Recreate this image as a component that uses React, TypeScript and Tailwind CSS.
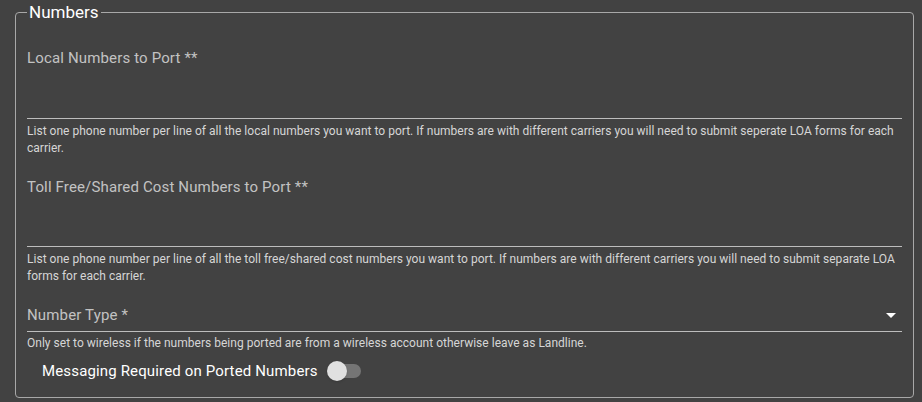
import React from "react";

export default function App() {
  return (
    <div
      className="w-[922px] h-[402px] bg-[#424242] pl-[15px] pr-[8px] pt-[2px] overflow-hidden"
      style={{ fontFamily: "Roboto, 'Liberation Sans', sans-serif" }}
    >
      <fieldset className="border border-[#a8a8a8] rounded-[4px] px-[11px] pb-[6px] h-[396px]">
        <legend className="px-[2px] text-[17px] leading-[20px] text-white">Numbers</legend>

        <div className="h-[97px] border-b border-[#bdbdbd] pt-[27px]">
          <div className="text-[15px] leading-[18px] tracking-[0.15px] text-[#c2c2c2]">Local Numbers to Port **</div>
        </div>
        <p className="mt-[4px] text-[12px] leading-[17px] tracking-[0.02px] text-[#d6d6d6]">
          List one phone number per line of all the local numbers you want to port. If numbers are with different carriers you will need to submit seperate LOA forms for each carrier.
        </p>

        <div className="h-[90px] border-b border-[#bdbdbd] pt-[21px]">
          <div className="text-[15px] leading-[18px] tracking-[0.15px] text-[#c2c2c2]">Toll Free/Shared Cost Numbers to Port **</div>
        </div>
        <p className="mt-[4px] text-[12px] leading-[17px] tracking-[0.02px] text-[#d6d6d6]">
          List one phone number per line of all the toll free/shared cost numbers you want to port. If numbers are with different carriers you will need to submit separate LOA forms for each carrier.
        </p>

        <div className="h-[47px] border-b border-[#bdbdbd] pt-[21px] flex items-start justify-between">
          <div className="text-[15px] leading-[18px] tracking-[0.15px] text-[#c2c2c2]">Number Type *</div>
          <svg width="10" height="5" viewBox="0 0 10 5" className="mt-[7px] mr-[6px]">
            <path d="M0 0 L10 0 L5 5 Z" fill="#ffffff" />
          </svg>
        </div>
        <p className="mt-[3px] text-[12px] leading-[17px] tracking-[0.02px] text-[#d6d6d6]">
          Only set to wireless if the numbers being ported are from a wireless account otherwise leave as Landline.
        </p>

        <div className="h-[38px] pl-[15px] flex items-center">
          <span className="text-[15px] leading-[20px] tracking-[0.15px] text-white">Messaging Required on Ported Numbers</span>
          <div className="relative ml-[12px] w-[31px] h-[14px] rounded-full bg-[#757575]">
            <div className="absolute left-[-3px] top-[-3px] w-[20px] h-[20px] rounded-full bg-[#e0e0e0] shadow" />
          </div>
        </div>
      </fieldset>
    </div>
  );
}
